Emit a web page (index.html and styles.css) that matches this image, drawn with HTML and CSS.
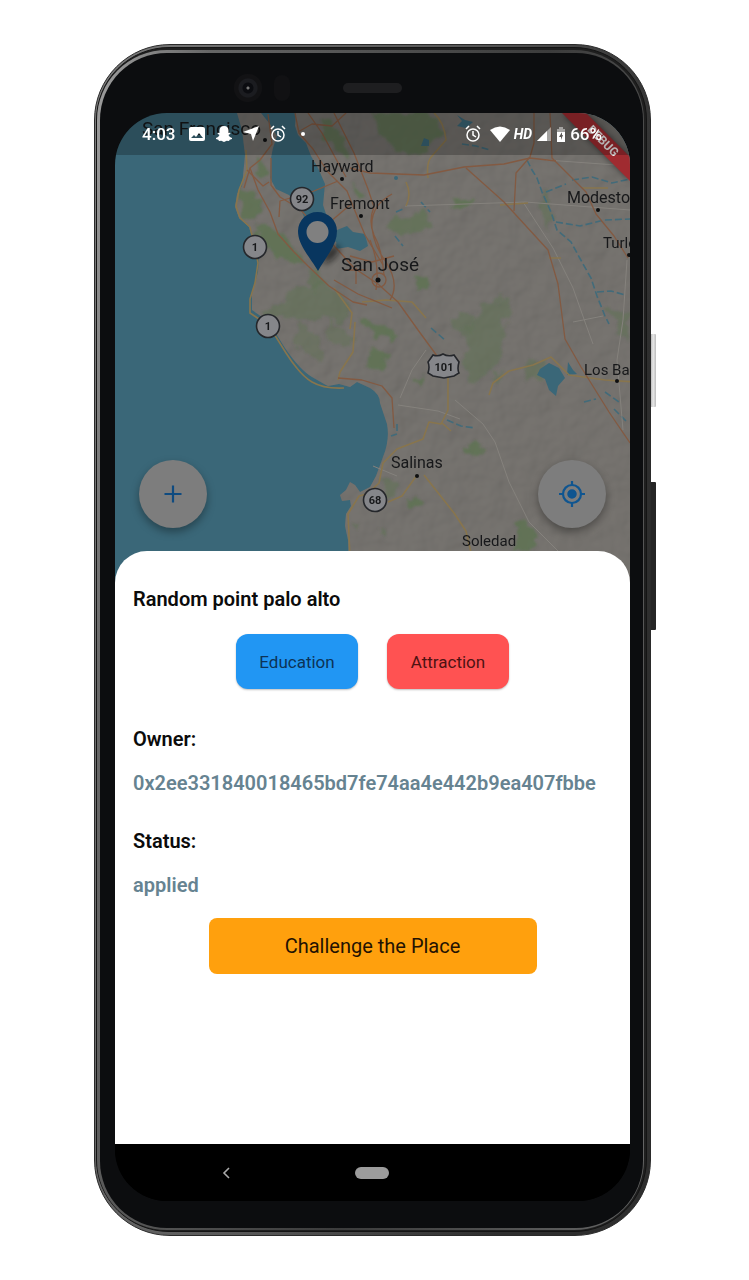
FILE: index.html
```html
<!DOCTYPE html>
<html lang="en">
<head>
<meta charset="utf-8">
<meta name="viewport" content="width=device-width, initial-scale=1">
<title>Random point palo alto</title>
<link rel="stylesheet" href="styles.css">
</head>
<body>
<div class="phone">
  <span class="side-key side-key-power"></span>
  <span class="side-key side-key-volume"></span>
  <div class="rim rim-outer"><div class="rim rim-dark"><div class="rim rim-inner"><div class="bezel">
    <div class="bezel-top">
      <span class="camera"></span>
      <span class="speaker"></span>
      <span class="sensor"></span>
    </div>
    <div class="screen">
      <main class="map-view">
        <svg class="map" viewBox="115 113 515 475" preserveAspectRatio="xMidYMin slice" role="img" aria-label="Map of the San Francisco Bay Area">
          <defs>
            <filter id="relief" x="0" y="0" width="100%" height="100%">
              <feTurbulence type="fractalNoise" baseFrequency="0.035" numOctaves="3" seed="8"/>
              <feDiffuseLighting surfaceScale="4" lighting-color="#85827e"><feDistantLight azimuth="225" elevation="55"/></feDiffuseLighting>
            </filter>
            <filter id="woods" x="-10%" y="-10%" width="120%" height="120%">
              <feTurbulence type="fractalNoise" baseFrequency="0.07" numOctaves="3" seed="4" result="n"/>
              <feDisplacementMap in="SourceGraphic" in2="n" scale="18" xChannelSelector="R" yChannelSelector="G"/>
              <feGaussianBlur stdDeviation="0.8"/>
            </filter>
            <filter id="soft" x="-50%" y="-50%" width="200%" height="200%"><feGaussianBlur stdDeviation="3"/></filter>
            <path id="land" d="M237 113L242 130 245 155 243 176 242 186 237 194 235 207 239 218 249 227 254 245 259 258 258 272 252 293 252 310 262 317 275 332 285 348Q300 370 312 377T328 386L339 384 350 387 357 382 370 388Q380 394 380 403L387 424Q390 440 383 457L376 476 370 487 360 492 355 485 350 482 346 490 340 495 342 501 350 500 351 506 346 514 345 526 348 540 350 590H631V112Z"/>
            <clipPath id="land-clip"><use href="#land"/></clipPath>
          </defs>
          <rect x="115" y="113" width="515" height="475" fill="#3a6778"/>
          <use href="#land" fill="#73706c"/>
          <g clip-path="url(#land-clip)">
            <rect x="230" y="113" width="400" height="475" filter="url(#relief)" opacity=".24"/>
            <g fill="#5c7350" filter="url(#woods)" opacity=".75">
              <path d="M372 113h56l14 20-20 22-24-4-20-18z"/>
              <path d="M240 190l14 2 8 16-8 14-14-5z"/><path d="M256 157l8 4 2 12-8 2z"/>
              <path d="M256 226l20 2 22 24 10 12-12 3-28-20-8 6z"/>
              <path d="M292 290l30-8 20 12 10 16-8 14-20-6-20 4-24-6-14 10-4-16 20-4z" opacity=".6"/>
              <path d="M300 325l20 15 4 22-14-6-16-14zM328 320l28 18-12 12-16-10z" opacity=".5"/>
              <path d="M306 270l14-2 6 16-12 8z" opacity=".7"/>
              <path d="M347 185l14 6 4 8-10-2zM321 116l20 14 8 28-14-10-14-16z"/>
              <path d="M452 195l10 5h14l-6 6h-18z"/><path d="M396 218l30-6 6 14-14 8-30-4z" opacity=".8"/>
              <path d="M414 274l12-2 6 20h-12z"/><path d="M484 302l22-6 4 14-8 22 2 26-18 16-14 10-12-18 8-20-12-12 14-8z" opacity=".6"/>
              <path d="M360 318l18 4 18 8v12l-20-6zM370 350l22 8-8 12-16-4z"/>
              <path d="M452 316h22v20l-18-4z" opacity=".6"/><path d="M526 362l22 2-4 14-20 4z" opacity=".6"/>
              <path d="M409 376h12l-4 8z"/><path d="M466 447l10-6 7 11-16 3z"/><path d="M405 500l14-4 2 13-14 2z"/>
              <path d="M516 520l10 2 14 18-14 12h-10z"/><path d="M385 480l14 4-2 12-14 4z" opacity=".6"/>
              <path d="M605 308l24 4v30z" opacity=".6"/><path d="M545 190l8 20-5 22-6-20z" opacity=".6"/>
              <path d="M352 520l8 4-4 8zM378 526l10 6-2 10zM492 370l14 4-10 8z" opacity=".6"/>
            </g>
          </g>
          <g fill="#3a6778">
            <path d="M261 113L270 124 277 136 273 148 271 158 270 178 276 189 289 195 300 207 306 222 325 236 340 244 340 236 330 226 323 205 325 184 318 168 311 156 306 143 298 135 295 126 296 113Z"/>
            <path d="M337 230l10-4 6 6 12 2 3 12-8 5-12-4-12 2z"/>
            <path d="M540 369l9-6 10 5 6 10-7 8-2 10-7-6-4-11-8-4z"/><path d="M568 362l5 8 4 4-10 1z"/>
            <path d="M424 138l5 2v6h-8z"/><path d="M457 115l8 5 8 2-7 6-9-2 5-5z"/><circle cx="396" cy="178" r="2"/>
          </g>
          <g fill="none" stroke="#426b7a" stroke-width="1.600" stroke-dasharray="7 3">
            <path d="M462 144l14 2 14 4M527 160l5 10 5 8 5 14 9 20 6 18 14 12 12 22 8 14 6 18 8 20 4 8M546 192l20-8M572 180l20-3 20 6 18-4M556 222l24 4 24-6 26-1M597 292l14-1 14 4"/>
            <path d="M421 202l9 10M396 212l9-4M395 236l8 10M431 328l14 12M447 420l14 6 14 2M605 392l14 10M614 409l12 12M584 402l12-3M397 424v10l-6 2"/>
          </g>
          <g fill="none" stroke="#85827d" stroke-width="1">
            <path d="M405 206l120-4 105 8M523 202l30 46 20 40 12 34 8 22M546 160l84 6M455 400l28 24 12 18 14 40 20 40 30 30M398 405l40 6 22 8M627 260l-4 60-6 40 6 70M400 398l12-28 14-20M573 322l30-6M373 466l24 10"/>
          </g>
          <g fill="none" stroke="#88754d" stroke-width="1.600" stroke-linejoin="round">
            <path d="M246 150l1 20-8 20-3 16 4 12 10 9 5 20 3 16-3 20-5 16v14l12 8 14 16 10 16q14 22 26 29t32 6"/>
            <path d="M355 322l-2 30-13 20-2 8M406 206q6-12 0-24M428 178q-2-16 4-22l14-16q-2-18-12-27M334 288l18 25-2 16M489 395l4-12 16-12 24-6 18-8 18 18 36 5 30 2M448 376v34l-7 14-12-2-6 17-26 10-14 14-4 20-12 11-8 2-11 18 2 44M441 422l10 9M417 475l-15 21-14 6M424 475l30 38 12 18 6 26"/>
            <path d="M500 205l28-2M582 188h26M549 258h12M362 302l24-2 26 2 14 16"/>
          </g>
          <g fill="none" stroke="#835a42" stroke-width="1.300" stroke-linejoin="round">
            <path d="M268 114l4 30-12 16-10 8-6 20M250 168l8 22 12 22 8 22 16 18 14 14 21 20 24 16 14 3"/>
            <path d="M271 158v27l9 12 20 12 22 25 16 16 16 18 24 16 20 18 20 28 22 30 6 18M247 170l16 16 6-4M295 113l4 20 14 16 14 22 20 20 8 20 10 24 18 30M308 113l14 20 14 26 10 18M298 132l14-8 20 2 14-13M338 181l-24 10-34 10-1 16M350 205l-20 17"/>
            <path d="M350 168l20 5 54 2 40-8 40-3 26-6 26 3M334 113l20 40 14 36 6 18q-6 14 0 28 8 14 10 40M392 194q-22 12-20 34 2 18 14 34 14 22 4 38"/>
            <path d="M534 113v30l-4 14-14 16-2 38M550 113l2 45 14 14 20 20 10 22 18 22 14 22M466 168l38 34 44 48 10 34 7 55 16 28 28 45 21 31"/>
            <path d="M338 378l24 2 20 6 10 12 2 30M350 256l22 6 22-6M370 240q10 24 6 50M334 280l24 14 34 14M344 270h22M356 268v16"/>
            <circle cx="379" cy="280" r="7"/>
          </g>
          <g fill="#85868a" stroke="#25272b" stroke-width="1.600">
            <circle cx="302" cy="199" r="11.500"/><circle cx="255" cy="247" r="11.500"/><circle cx="268" cy="326" r="11.500"/><circle cx="375" cy="500" r="11.500"/>
            <path d="M433 355q5 2 10-1 5 3 11 1l5 7q-2 7 0 11l-5 3-10 2-11-2-5-3q2-6 0-11z"/>
          </g>
          <g class="shield-text"><text x="302" y="203">92</text><text x="255" y="251">1</text><text x="268" y="330">1</text><text x="375" y="504">68</text><text x="444" y="371">101</text></g>
          <g fill="#0e0f10"><circle cx="265" cy="140" r="2"/><circle cx="342" cy="179" r="2"/><circle cx="361" cy="216" r="2"/><circle cx="378" cy="280" r="2.500"/><circle cx="598" cy="210" r="2"/><circle cx="629" cy="255" r="2"/><circle cx="617" cy="381" r="2"/><circle cx="417" cy="476" r="2"/></g>
          <g class="places">
            <text class="city-large" x="142" y="135">San Francisco</text>
            <text class="city-large" x="341" y="271">San José</text>
            <text x="311" y="172">Hayward</text><text x="330" y="209">Fremont</text><text x="567" y="203">Modesto</text>
            <text class="city-small" x="603" y="248">Turlock</text><text class="city-small" x="584" y="375">Los Banos</text>
            <text x="391" y="468">Salinas</text><text class="city-small" x="462" y="546">Soledad</text>
          </g>
          <ellipse cx="331" cy="254" rx="11" ry="5" transform="rotate(-45 331 254)" fill="#111" opacity=".65" filter="url(#soft)"/>
          <path d="M318 271C311 258 298 246 298 231a19.500 19 0 0 1 39 0C337 246 325 258 318 271Z" fill="#08365f"/>
          <circle cx="317.500" cy="232" r="11" fill="#808080"/>
        </svg>
        <svg class="ribbon" viewBox="0 0 70 70" aria-hidden="true"><path d="M2 0H26L70 44V68z"/><text x="43" y="32" transform="rotate(45 43 28)">DEBUG</text></svg>
        <header class="status-bar">
          <div class="status-group status-left">
            <span class="clock">4:03</span>
            <svg class="icon" viewBox="0 0 18 18" aria-hidden="true"><path fill-rule="evenodd" d="M3 2h12q2 0 2 2v10q0 2-2 2H3q-2 0-2-2V4q0-2 2-2zm0 11h12l-4-5-3 4-2-2z"/></svg>
            <svg class="icon" viewBox="0 0 18 18" aria-hidden="true"><path d="M9 1c3 0 4.500 2 4.500 4.500V8l1.500-.3.5 1-2 1.300c.7 1.600 2 2.600 3.500 3v1l-2.300.7-.7 1.200-2.300-.2L9 17l-2.700-1.300-2.300.2-.7-1.200L1 14v-1c1.500-.4 2.800-1.400 3.500-3l-2-1.300.5-1 1.500.3V5.500C4.500 3 6 1 9 1z"/></svg>
            <svg class="icon" viewBox="0 0 18 18" aria-hidden="true"><path d="M17 1L11 16 9 9 1 7z"/></svg>
            <svg class="icon" viewBox="0 0 18 18" aria-hidden="true"><g fill="none" stroke="#fff" stroke-width="1.500"><circle cx="9" cy="10" r="6"/><path d="M9 6v4l3 2M2 4l3-3M16 4l-3-3"/></g></svg>
            <span class="dot"></span>
          </div>
          <div class="status-group status-right">
            <svg class="icon" viewBox="0 0 18 18" aria-hidden="true"><g fill="none" stroke="#fff" stroke-width="1.500"><circle cx="9" cy="10" r="6"/><path d="M9 6v4l3 2M2 4l3-3M16 4l-3-3"/></g></svg>
            <svg class="icon icon-wifi" viewBox="0 0 20 16" aria-hidden="true"><path d="M0 4Q10-3 20 4L10 16z"/></svg>
            <span class="hd">HD</span>
            <svg class="icon icon-signal" viewBox="0 0 16 16" aria-hidden="true"><path d="M1 15L15 1v14z" opacity=".45"/><path d="M1 15L11 5v10z"/></svg>
            <svg class="icon icon-battery" viewBox="0 0 10 16" aria-hidden="true"><path d="M3 1h4v2h2v4H1V3h2z" opacity=".45"/><path fill-rule="evenodd" d="M1 6h8v10H1zm4 8l2-5H6V6L3 11h2z"/></svg>
            <span class="charge">66%</span>
          </div>
        </header>
        <div class="map-actions">
          <button class="fab" type="button" aria-label="Add place"><svg viewBox="0 0 28 28" width="28" height="28"><path d="M14 5.500v17M5.500 14h17" stroke="#0f4b80" stroke-width="2.200"/></svg></button>
          <button class="fab" type="button" aria-label="My location"><svg viewBox="0 0 28 28" width="28" height="28" fill="none" stroke="#0f5590" stroke-width="2.200"><circle cx="14" cy="14" r="9"/><circle cx="14" cy="14" r="4" fill="#0f5590" stroke-width="1.500"/><path d="M14 1v4M14 23v4M1 14h4M23 14h4"/></svg></button>
        </div>
      </main>
      <section class="sheet">
        <h1 class="heading">Random point palo alto</h1>
        <div class="tags">
          <button class="tag tag-education" type="button">Education</button>
          <button class="tag tag-attraction" type="button">Attraction</button>
        </div>
        <dl class="details">
          <div class="detail"><dt class="heading">Owner:</dt><dd class="heading value">0x2ee331840018465bd7fe74aa4e442b9ea407fbbe</dd></div>
          <div class="detail"><dt class="heading">Status:</dt><dd class="heading value">applied</dd></div>
        </dl>
        <button class="challenge" type="button">Challenge the Place</button>
      </section>
      <nav class="nav-bar">
        <button class="nav-key" type="button" aria-label="Back"><svg viewBox="0 0 10 14" width="10" height="14"><path d="M8 2L3 7l5 5" fill="none" stroke="#aaa" stroke-width="1.600"/></svg></button>
        <button class="nav-key" type="button" aria-label="Home"><span class="home-pill"></span></button>
      </nav>
    </div>
  </div></div></div></div>
</div>
</body>
</html>
```

FILE: styles.css
```css
* { box-sizing: border-box; }
body {
  margin: 0;
  padding: 44px 98px 44px 94px;
  background: #fff;
  font-family: Roboto, "Liberation Sans", sans-serif;
  color: #0b0b0b;
}
button { margin: 0; padding: 0; border: 0; font: inherit; color: inherit; }

/* Device body */
.phone { position: relative; min-width: 320px; }
.side-key { position: absolute; right: -5px; width: 7px; border-radius: 1px; }
.side-key-power { top: 290px; height: 73px; background: linear-gradient(90deg, #999, #e8e8e8 60%, #bbb); }
.side-key-volume { top: 438px; height: 148px; background: #252525; }
.rim { position: relative; border: 1px solid #2a2a2a; }
.rim-outer { padding: 2px 3px 3px 1px; border-radius: 76px; background: linear-gradient(100deg, #7a7a7a, #555 50%, #2e2e2e 80%); }
.rim-dark { padding: 2px 2px 1px 0; border-radius: 73px; border-color: #141414; background: #1f1f1f; }
.rim-inner { padding: 3px 1px 2px 3px; border-width: 0; border-radius: 70px; background: linear-gradient(100deg, #a0a0a0, #666 15%, #3c3c3c 60%, #666); }
.bezel { padding: 0 13px 27px 15px; border-radius: 67px; background: #0c0d0f; }
.bezel-top {
  display: grid;
  grid-template-columns: 1fr auto 1fr;
  align-items: center;
  height: 60px;
  padding-top: 10px;
}
.speaker { grid-area: 1 / 2; width: 59px; height: 10px; border-radius: 5px; background: #1e1e20; }
.camera {
  grid-area: 1 / 1;
  justify-self: end;
  width: 28px;
  height: 28px;
  margin-right: 81px;
  border-radius: 50%;
  background: radial-gradient(circle, #777 0 1px, #0b0c10 2px 5px, #1b1c20 6px 9px, #121214 10px);
}
.sensor { grid-area: 1 / 1; justify-self: end; width: 16px; height: 26px; margin-right: 53px; border-radius: 8px; background: #111113; }

.screen { position: relative; overflow: hidden; border-radius: 52px; background: #000; }

/* Map */
.map-view { position: relative; display: flex; flex-direction: column; justify-content: space-between; min-height: 438px; }
.map { position: absolute; top: 0; left: 0; width: 100%; height: 475px; }
.places { font-size: 16px; fill: #17181a; }
.city-large { font-size: 19px; }
.city-small { font-size: 15px; }
.shield-text { font-size: 11px; font-weight: 700; text-anchor: middle; fill: #17181a; }

.status-bar {
  position: relative;
  display: flex;
  justify-content: space-between;
  align-items: center;
  height: 42px;
  padding: 0 28px 0 27px;
  background: rgba(0, 0, 0, .24);
  color: #fff;
  font-size: 17px;
  font-weight: 500;
}
.status-group { display: flex; align-items: center; }
.status-left { gap: 9px; }
.status-right { gap: 4px; }
.clock { margin-right: 4px; }
.icon { width: 18px; height: 18px; fill: #fff; }
.icon-wifi { width: 20px; height: 16px; margin-left: 4px; }
.icon-signal { width: 16px; height: 16px; }
.icon-battery { width: 10px; height: 16px; }
.dot { width: 4px; height: 4px; margin-left: 5px; border-radius: 50%; background: #fff; }
.hd { font-size: 14px; font-weight: 700; font-style: italic; }
.ribbon { position: absolute; top: 0; right: 0; width: 70px; height: 70px; fill: #a02b30; filter: drop-shadow(0 0 3px rgba(0, 0, 0, .5)); }
.ribbon text { font-size: 12px; font-weight: 700; text-anchor: middle; fill: #f0ecec; }

.map-actions { position: relative; display: flex; justify-content: space-between; padding: 0 24px 23px; }
.fab {
  display: grid;
  place-items: center;
  width: 68px;
  height: 68px;
  border-radius: 50%;
  background: #7d7d7d;
  box-shadow: 0 4px 8px rgba(0, 0, 0, .35);
}

/* Place sheet */
.sheet {
  position: relative;
  display: flex;
  flex-direction: column;
  min-height: 593px;
  padding: 36px 18px 40px;
  border-radius: 32px 32px 0 0;
  background: #fff;
}
.heading { margin: 0; font-size: 20px; line-height: 24px; font-weight: 600; overflow-wrap: anywhere; }
.value { color: #668391; }
.tags { display: flex; flex-wrap: wrap; justify-content: center; gap: 29px; margin-top: 23px; }
.tag { width: 122px; height: 55px; border-radius: 12px; font-size: 17px; box-shadow: 0 1px 2px rgba(0, 0, 0, .25); }
.tag-education { background: #2196f3; color: #0c3357; }
.tag-attraction { background: #ff5252; color: #4e1212; }
.details { display: flex; flex-direction: column; gap: 34px; margin: 38px 0 21px; }
.detail { display: flex; flex-direction: column; gap: 20px; }
.challenge { align-self: center; width: 328px; max-width: 100%; height: 56px; border-radius: 8px; background: #ffa00d; color: #231202; font-size: 20px; }

/* System navigation */
.nav-bar { display: grid; grid-template-columns: 43% 14% 43%; height: 57px; background: #000; }
.nav-key { display: grid; place-items: center; background: none; }
.home-pill { width: 34px; height: 12px; border-radius: 6px; background: #9c9c9c; }
```
